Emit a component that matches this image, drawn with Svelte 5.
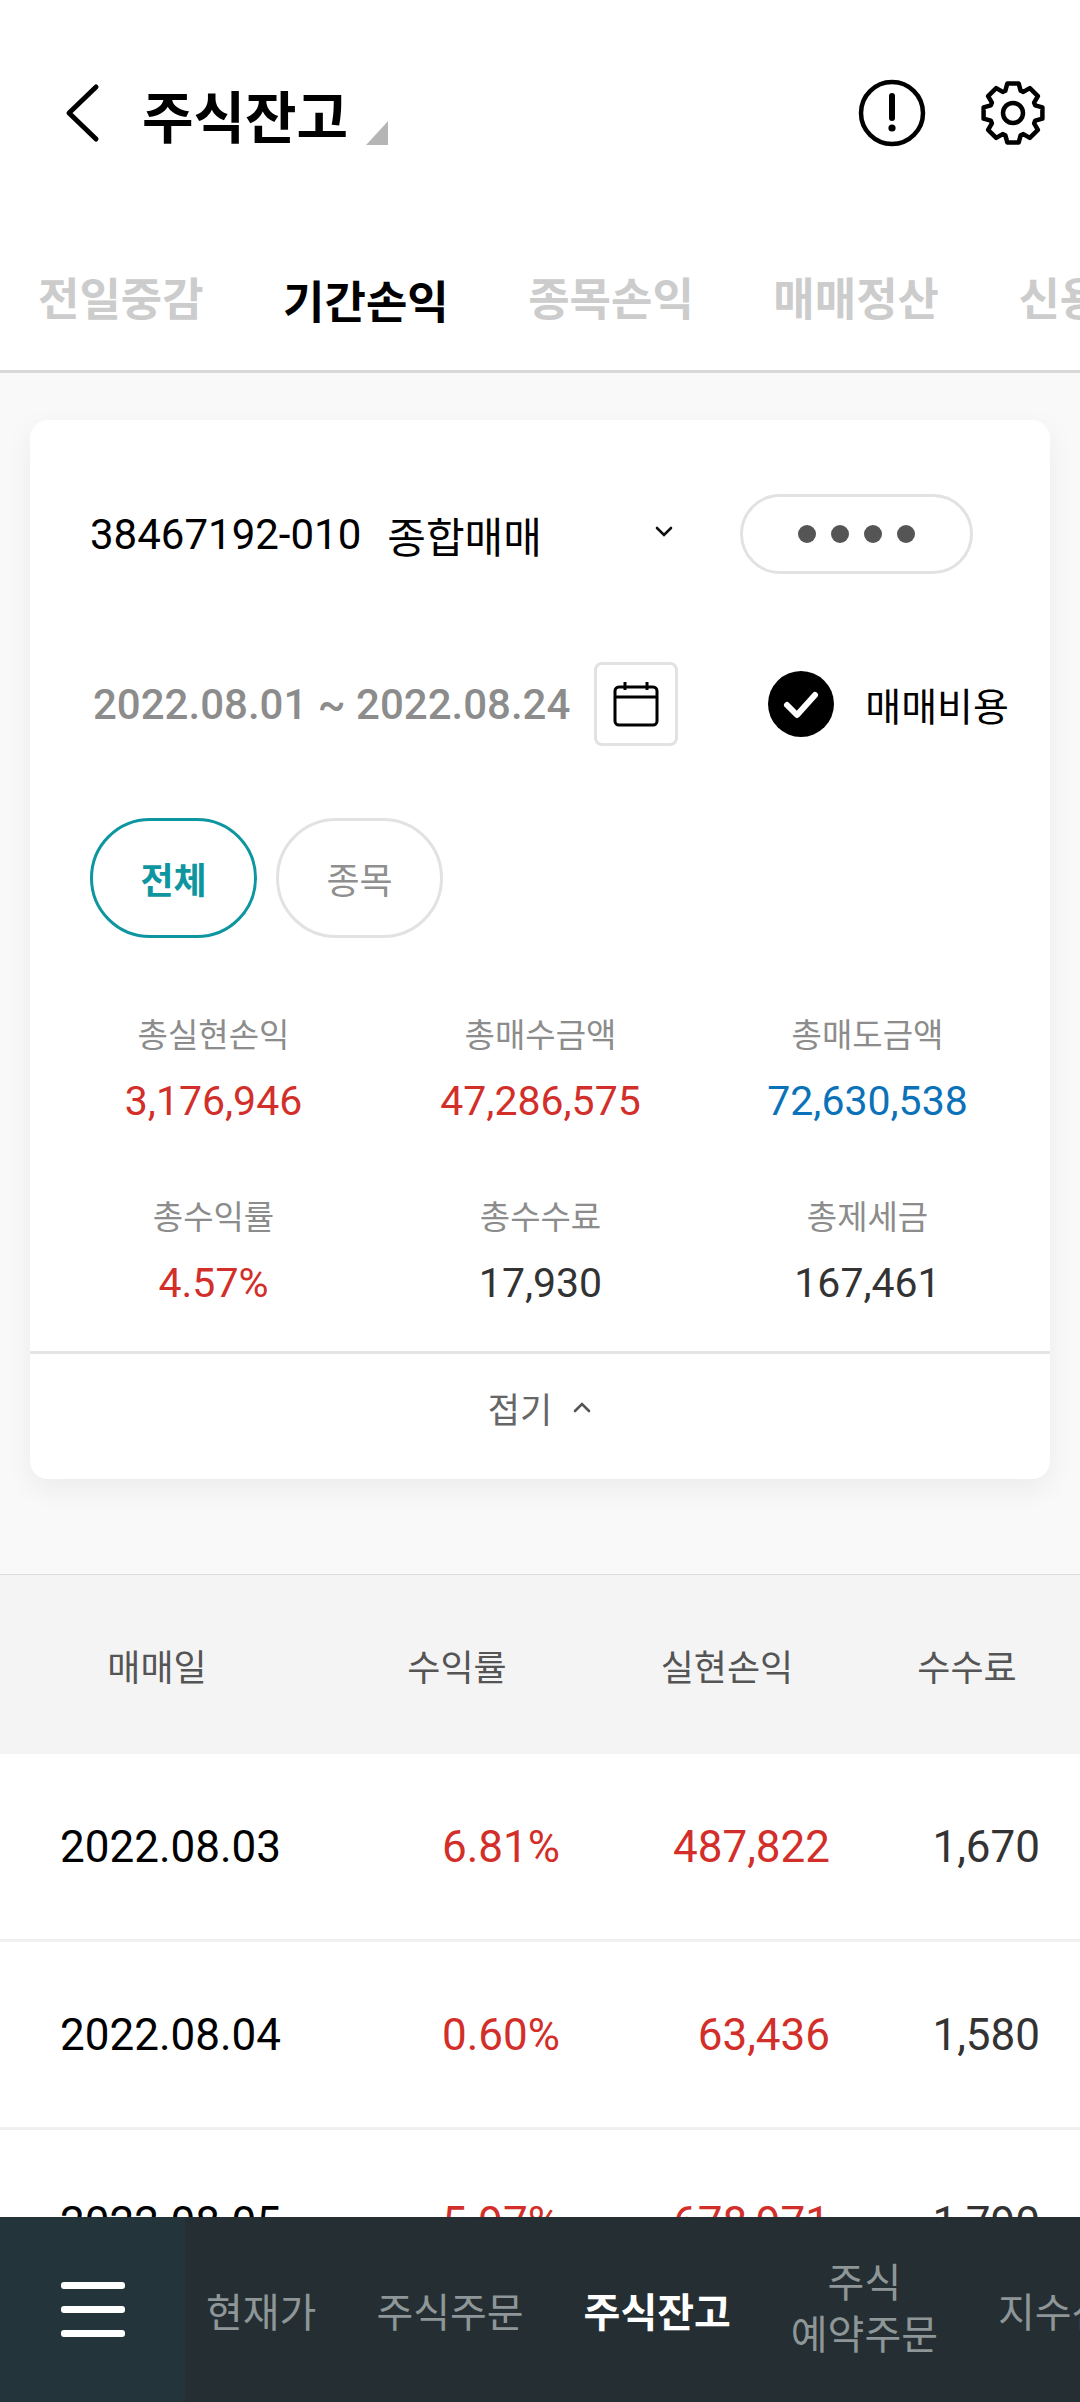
<script>
    const tabs = ["전일중감", "기간손익", "종목손익", "매매정산", "신용손익"];
    const stats = [
        { label: "총실현손익", value: "3,176,946", tone: "up" },
        { label: "총매수금액", value: "47,286,575", tone: "up" },
        { label: "총매도금액", value: "72,630,538", tone: "down" },
        { label: "총수익률", value: "4.57%", tone: "up" },
        { label: "총수수료", value: "17,930", tone: "" },
        { label: "총제세금", value: "167,461", tone: "" }
    ];
    const rows = [
        ["2022.08.03", "6.81%", "487,822", "1,670"],
        ["2022.08.04", "0.60%", "63,436", "1,580"],
        ["2022.08.05", "5.97%", "678,971", "1,790"]
    ];
    const navItems = ["현재가", "주식주문", "주식잔고"];

    // 8-tooth gear outline, center 35,35
    const gearPath = () => {
        const pts = [];
        for(let i = 0; i < 8; i++) {
            const a = i * 45 - 90;
            for(const [da, r] of [[-19, 23.5], [-11, 30], [11, 30], [19, 23.5]]) {
                const rad = (a + da) * Math.PI / 180;
                pts.push((35 + r * Math.cos(rad)).toFixed(1) + " " + (35 + r * Math.sin(rad)).toFixed(1));
            }
        }
        return "M" + pts.join("L") + "Z";
    };
</script>

<div class="page">
    <header class="top">
        <svg class="back" width="40" height="60" viewBox="0 0 40 60">
            <path d="M34 4 L7 30 L34 56" fill="none" stroke="#000" stroke-width="5" stroke-linecap="round" stroke-linejoin="round"/>
        </svg>
        <h1>주식잔고</h1>
        <span class="corner"></span>
        <div class="spacer"></div>
        <svg width="70" height="70" viewBox="0 0 70 70">
            <circle cx="35" cy="35" r="31" fill="none" stroke="#000" stroke-width="4.5"/>
            <path d="M35 18 V40" stroke="#000" stroke-width="6" stroke-linecap="round"/>
            <circle cx="35" cy="50" r="3.6" fill="#000"/>
        </svg>
        <svg class="gear" width="70" height="70" viewBox="0 0 70 70">
            <path d={gearPath()} fill="none" stroke="#000" stroke-width="4.5" stroke-linejoin="round"/>
            <circle cx="35" cy="35" r="10" fill="none" stroke="#000" stroke-width="4.5"/>
        </svg>
    </header>

    <nav class="tabs">
        {#each tabs as tab, i}
            <div class="tab" class:active={i === 1}>{tab}</div>
        {/each}
    </nav>

    <main class="content">
        <section class="summary">
            <div class="card">
                <div class="account">
                    <span class="acc-no">38467192-010</span>
                    <span class="acc-type">종합매매</span>
                    <svg class="acc-arrow" width="20" height="14" viewBox="0 0 20 14">
                        <path d="M3 3 L10 10 L17 3" fill="none" stroke="#111" stroke-width="2.6" stroke-linecap="round"/>
                    </svg>
                    <div class="pw">
                        <i></i><i></i><i></i><i></i>
                    </div>
                </div>

                <div class="period">
                    <span class="dates">2022.08.01 ~ 2022.08.24</span>
                    <div class="cal">
                        <svg width="48" height="48" viewBox="0 0 48 48">
                            <rect x="3" y="7" width="42" height="38" rx="4" fill="none" stroke="#000" stroke-width="3"/>
                            <path d="M3 17 H45 M13 2 V10 M35 2 V10" stroke="#000" stroke-width="3" fill="none"/>
                        </svg>
                    </div>
                    <div class="check">
                        <svg width="66" height="66" viewBox="0 0 66 66">
                            <circle cx="33" cy="33" r="33" fill="#000"/>
                            <path d="M19 34 L29 44 L47 24" fill="none" stroke="#fff" stroke-width="6" stroke-linecap="round" stroke-linejoin="round"/>
                        </svg>
                        <span>매매비용</span>
                    </div>
                </div>

                <div class="pills">
                    <div class="pill on">전체</div>
                    <div class="pill">종목</div>
                </div>

                <div class="stats">
                    {#each stats as s}
                        <div class="stat">
                            <div class="stat-label">{s.label}</div>
                            <div class="stat-value {s.tone}">{s.value}</div>
                        </div>
                    {/each}
                </div>

                <div class="fold">
                    <span>접기</span>
                    <svg width="20" height="14" viewBox="0 0 20 14">
                        <path d="M3 11 L10 4 L17 11" fill="none" stroke="#555" stroke-width="2.6" stroke-linecap="round"/>
                    </svg>
                </div>
            </div>
        </section>

        <div class="thead">
            <span class="c-date">매매일</span>
            <span class="c-rate">수익률</span>
            <span class="c-pnl">실현손익</span>
            <span class="c-fee">수수료</span>
        </div>
        {#each rows as r}
            <div class="row">
                <span class="r-date">{r[0]}</span>
                <span class="r-rate">{r[1]}</span>
                <span class="r-pnl">{r[2]}</span>
                <span class="r-fee">{r[3]}</span>
            </div>
        {/each}
    </main>

    <footer class="bottom">
        <div class="menu">
            <i></i><i></i><i></i>
        </div>
        <div class="nav-items">
            {#each navItems as item, i}
                <span class="nav-item" class:current={i === 2}>{item}</span>
            {/each}
            <span class="nav-item two">주식<br>예약주문</span>
            <span class="nav-item">지수선물</span>
        </div>
    </footer>
</div>

<style>
    :global(body) {
        margin: 0;
        background: #ffffff;
    }

    .page {
        width: 1080px;
        height: 2402px;
        display: flex;
        flex-direction: column;
        overflow: hidden;
        font-family: Roboto, "Noto Sans CJK KR", sans-serif;
    }

    .top {
        height: 226px;
        flex: none;
        display: flex;
        align-items: center;
        padding: 0 32px 0 62px;
        box-sizing: border-box;
    }

    h1 {
        margin: 0 0 0 40px;
        font-size: 56px;
        font-weight: 700;
        color: #000;
    }

    .corner {
        width: 22px;
        height: 24px;
        margin: 40px 0 0 18px;
        background: #b5b5b5;
        clip-path: polygon(100% 0, 100% 100%, 0 100%);
    }

    .spacer {
        flex: 1;
    }

    .gear {
        margin-left: 51px;
    }

    .tabs {
        height: 144px;
        flex: none;
        display: flex;
        margin-left: -2px;
        border-bottom: 3px solid #d8d8d8;
        box-sizing: content-box;
        overflow: hidden;
    }

    .tab {
        flex: none;
        height: 144px;
        box-sizing: border-box;
        padding: 0 39.5px 0 40px;
        display: flex;
        align-items: center;
        justify-content: center;
        font-size: 45px;
        font-weight: 700;
        color: #cccccc;
        white-space: nowrap;
        border-bottom: 3px solid transparent;
    }

    .tab.active {
        color: #000;
        height: 147px;
        border-bottom-color: #000;
        padding-top: 3px;
    }

    .tabs {
        height: 144px;
    }

    .content {
        flex: 1;
        min-height: 0;
        overflow: hidden;
    }

    .summary {
        background: #f9f9f9;
        height: 1201px;
        box-sizing: border-box;
        padding: 47px 30px 0;
    }

    .card {
        height: 1059px;
        background: #fff;
        border-radius: 18px;
        box-shadow: 0 10px 30px rgba(0, 0, 0, 0.06);
        box-sizing: border-box;
        padding-top: 74px;
    }

    .account {
        display: flex;
        align-items: center;
        height: 80px;
        padding-left: 60px;
    }

    .acc-no {
        font-size: 42px;
        color: #000;
    }

    .acc-type {
        font-size: 42px;
        color: #000;
        margin-left: 26px;
    }

    .acc-arrow {
        margin-left: 112px;
        margin-top: -4px;
    }

    .pw {
        margin-left: 66px;
        width: 233px;
        height: 80px;
        box-sizing: border-box;
        border: 3px solid #e2e2e2;
        border-radius: 40px;
        display: flex;
        align-items: center;
        justify-content: center;
        gap: 15px;
    }

    .pw i {
        width: 18px;
        height: 18px;
        border-radius: 50%;
        background: #555;
    }

    .period {
        display: flex;
        align-items: center;
        height: 84px;
        margin-top: 88px;
        padding-left: 63px;
    }

    .dates {
        font-size: 42px;
        font-weight: 500;
        color: #8c8c8c;
        white-space: nowrap;
    }

    .cal {
        margin-left: 24px;
        width: 84px;
        height: 84px;
        box-sizing: border-box;
        border: 3px solid #e2e2e2;
        border-radius: 8px;
        display: flex;
        align-items: center;
        justify-content: center;
    }

    .check {
        display: flex;
        align-items: center;
        margin-left: 90px;
        gap: 31px;
        font-size: 39px;
        color: #000;
        white-space: nowrap;
    }

    .pills {
        display: flex;
        gap: 19px;
        margin-top: 72px;
        padding-left: 60px;
    }

    .pill {
        width: 167px;
        height: 120px;
        box-sizing: border-box;
        border: 3px solid #e2e2e2;
        border-radius: 60px;
        display: flex;
        align-items: center;
        justify-content: center;
        font-size: 36px;
        color: #8f8f8f;
    }

    .pill.on {
        border-color: #0e96a0;
        color: #0e96a0;
        font-weight: 700;
    }

    .stats {
        display: grid;
        grid-template-columns: repeat(3, 327px);
        row-gap: 64px;
        margin-top: 73px;
        padding-left: 20px;
    }

    .stat {
        text-align: center;
        height: 118px;
    }

    .stat-label {
        font-size: 33px;
        line-height: 50px;
        color: #8c8c8c;
    }

    .stat-value {
        font-size: 41px;
        line-height: 56px;
        margin-top: 12px;
        color: #333;
    }

    .stat-value.up {
        color: #d32f2a;
    }

    .stat-value.down {
        color: #0b72b9;
    }

    .fold {
        margin-top: 40px;
        border-top: 3px solid #e4e4e4;
        height: 106px;
        display: flex;
        align-items: center;
        justify-content: center;
        gap: 20px;
        font-size: 35px;
        color: #666;
    }

    .thead {
        height: 180px;
        background: #f4f4f4;
        border-top: 1px solid #dcdcdc;
        box-sizing: border-box;
        position: relative;
        display: grid;
        grid-template-columns: 314px 286px 254px 1fr;
        align-items: center;
        font-size: 36px;
        color: #555;
        text-align: center;
    }

    .row {
        height: 188px;
        box-sizing: border-box;
        border-bottom: 3px solid #f0f0f0;
        display: grid;
        grid-template-columns: 60px 254px 246px 270px 210px;
        align-items: center;
        font-size: 44px;
        color: #333;
    }

    .r-date {
        grid-column: 2;
        color: #000;
        white-space: nowrap;
        margin-left: -60px;
        padding-left: 60px;
    }

    .r-rate {
        grid-column: 3;
        text-align: right;
        color: #d32f2a;
    }

    .r-pnl {
        grid-column: 4;
        text-align: right;
        color: #d32f2a;
    }

    .r-fee {
        grid-column: 5;
        text-align: right;
    }

    .bottom {
        height: 185px;
        flex: none;
        display: flex;
        background: #252f33;
        overflow: hidden;
    }

    .menu {
        width: 185px;
        flex: none;
        background: #24343b;
        display: flex;
        flex-direction: column;
        align-items: center;
        justify-content: center;
        gap: 17px;
    }

    .menu i {
        width: 64px;
        height: 7px;
        border-radius: 3px;
        background: #fff;
    }

    .nav-items {
        display: flex;
        align-items: center;
        gap: 60px;
        padding-left: 21px;
        font-size: 40px;
        color: #8e9698;
        white-space: nowrap;
    }

    .nav-item {
        flex: none;
        text-align: center;
    }

    .nav-item.current {
        color: #fff;
        font-weight: 700;
    }

    .nav-item.two {
        line-height: 52px;
    }
</style>
